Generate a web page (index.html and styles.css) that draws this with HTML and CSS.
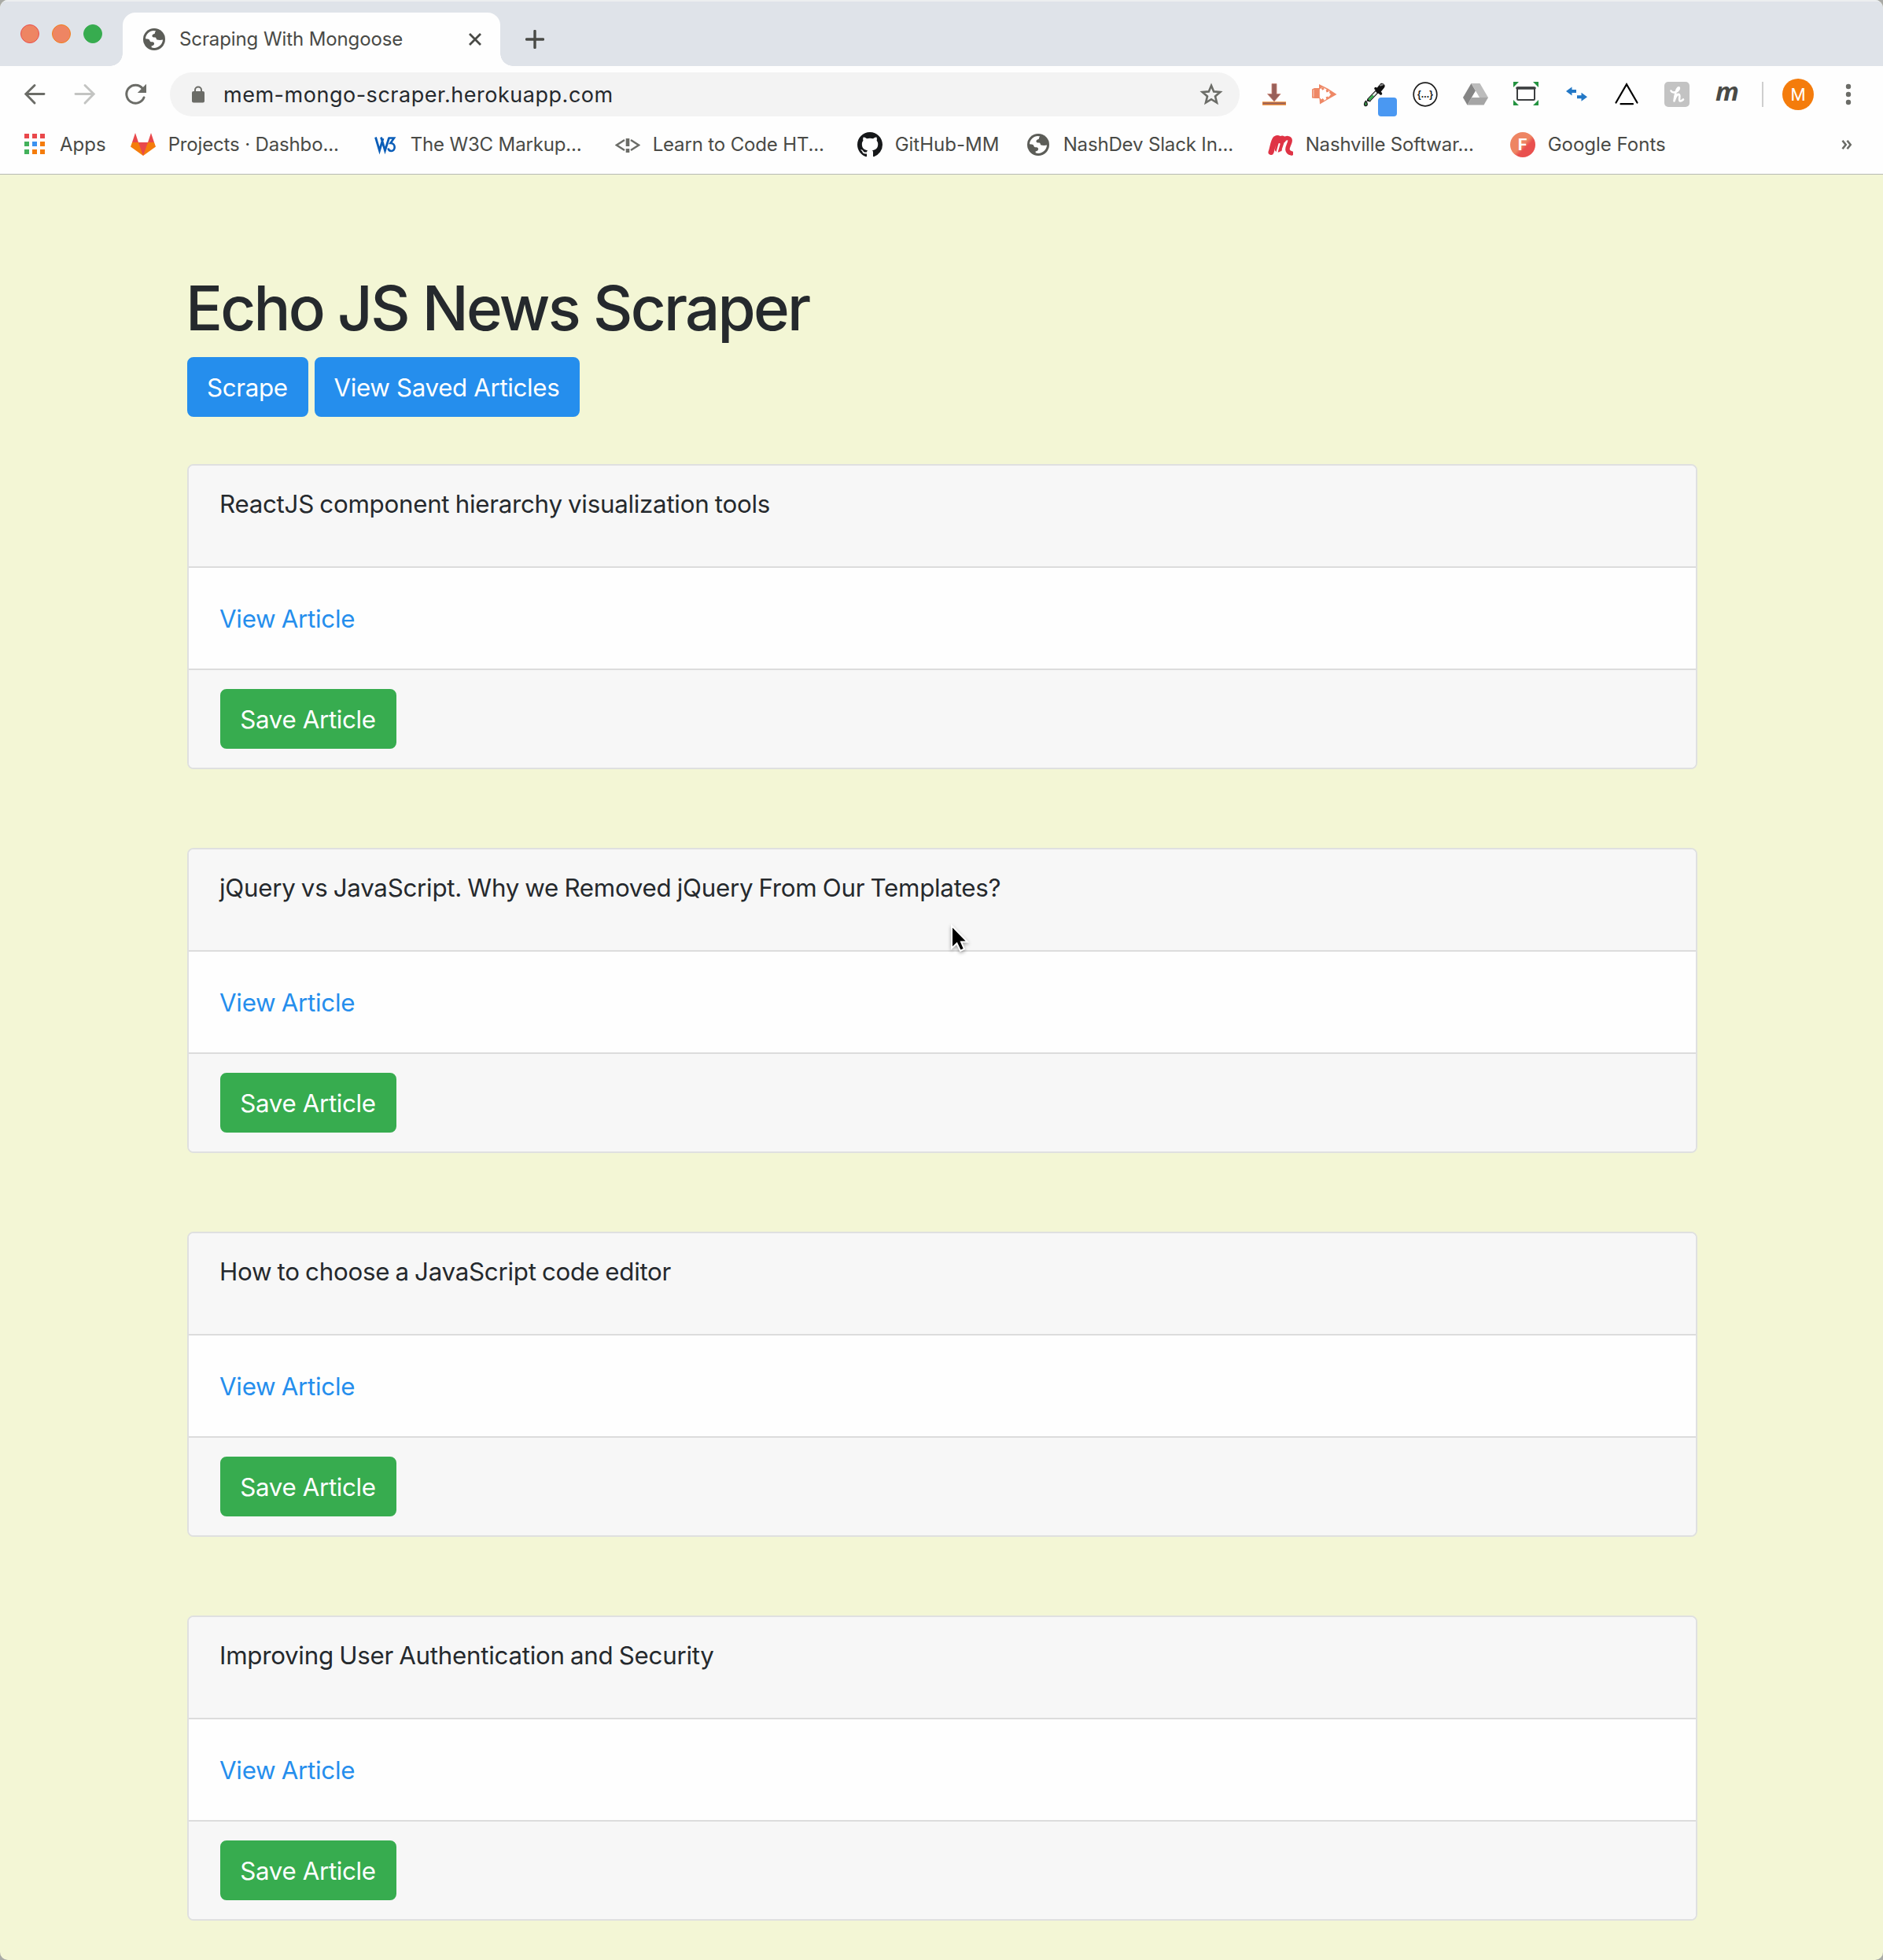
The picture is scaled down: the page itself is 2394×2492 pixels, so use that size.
FILE: index.html
```html
<!DOCTYPE html>
<html lang="en">
<head>
<meta charset="utf-8">
<title>Scraping With Mongoose</title>
<link rel="stylesheet" href="styles.css">
</head>
<body>
<svg class="defs" width="0" height="0" aria-hidden="true">
  <symbol id="globe" viewBox="0 0 28 28">
    <circle cx="14" cy="14" r="14" fill="#5c5d58"/>
    <path fill="#fff" d="M3 13.2C3.2 7.500 8.200 3.200 13.500 3.100L16.200 3.400C15.300 4.400 14.600 5.600 14.900 6.700C13.600 7.100 12.200 7.400 11.600 8.700C11.200 9.700 11.500 10.800 12.500 11.300C14 11.700 15.100 11.200 16.300 12.100C16.800 13 16.600 14.100 17.600 14.500C19.800 15 22.600 15 25 14.500C24.700 20 20 24.900 14 25C12.800 25 11.600 24.700 10.600 24.300L10.700 22.300C12.300 22.100 13.600 21.400 14 19.900C14.300 18.400 13.300 17.200 11.700 17.200C9.900 17.300 8.700 16.800 8.300 15.400C8.100 14.100 7.100 13.400 5.500 13.400Z"/>
  </symbol>
</svg>

<div class="window">
  <header class="tabstrip">
    <div class="lights"><i class="light light--close"></i><i class="light light--min"></i><i class="light light--max"></i></div>
    <div class="tab">
      <svg class="tab__icon" width="28" height="28"><use href="#globe"/></svg>
      <span class="tab__title">Scraping With Mongoose</span>
      <svg class="tab__close" width="16" height="16" viewBox="0 0 16 16"><path d="M1 1l14 14M15 1L1 15" stroke="#494a46" stroke-width="2.8"/></svg>
    </div>
    <svg class="newtab" width="24" height="24" viewBox="0 0 24 24"><path d="M12 1.500v21M1.500 12h21" stroke="#494a46" stroke-width="3.400" stroke-linecap="round"/></svg>
  </header>

  <div class="toolbar">
    <svg width="32" height="32" viewBox="0 0 32 32" fill="none" stroke="#6b6c67" stroke-width="2.900" stroke-linecap="round"><path d="M28 15.500H5M16 4.500L4.800 15.500L16 27"/></svg>
    <svg width="32" height="32" viewBox="0 0 32 32" fill="none" stroke="#c3c4c2" stroke-width="2.900" stroke-linecap="round"><path d="M4 15.500H27M16 4.500L27.200 15.500L16 27"/></svg>
    <svg width="32" height="32" viewBox="0 0 32 32"><path d="M27 20A11.500 11.500 0 1 1 25.300 8.500" fill="none" stroke="#6b6c67" stroke-width="3" stroke-linecap="round"/><path d="M30 2.800V14H18.800Z" fill="#6b6c67"/></svg>
    <div class="omnibox">
      <svg width="16" height="22" viewBox="0 0 16 22"><path d="M4 8V5.500a4 4 0 0 1 8 0V8" fill="none" stroke="#6b6c67" stroke-width="2"/><rect y="7" width="16" height="14.500" rx="2" fill="#6b6c67"/></svg>
      <span class="omnibox__url">mem-mongo-scraper.herokuapp.com</span>
      <svg class="omnibox__star" width="32" height="32" viewBox="0 0 32 32"><path d="M16 4.800L19.200 12.400L27.300 13L21 18.400L23 26.500L16 22.200L9 26.500L11 18.400L4.700 13L12.800 12.400Z" fill="none" stroke="#6b6c67" stroke-width="2.600"/></svg>
    </div>
    <div class="extensions">
      <svg width="32" height="32" viewBox="0 0 32 32"><path d="M13 2.500h6v13h5L16 25L7.500 15.500H13Z" fill="#98605a" stroke="#c98272" stroke-width=".8"/><rect x="1" y="25.300" width="30" height="4.500" fill="#f18a2d"/><rect x="1.500" y="26.300" width="29" height="2.200" fill="#98605a"/></svg>
      <svg width="32" height="32" viewBox="0 0 32 32"><path fill="#ee8866" d="M0 9.500L3 8h6V3L20 8.500L31.500 16L20 22.500L10 28.500L9.500 21H4L0 20.500Z"/><path fill="#fff" d="M9.800 9.500L13.500 6.800L22.500 12L22 14L24 16L22 18.500L20 21L16 23.500L13 24L9.800 20Z"/><path d="M2 10v9" stroke="#f8d0c2"/><path d="M13 7.500l1.500 2.500M19 10l1 3M19 19l1 3M12.500 22l2 2" stroke="#ee8866" stroke-width="3"/></svg>
      <span class="picker"><svg width="32" height="32" viewBox="0 0 32 32"><path d="M20 11L8.500 23L8 25" fill="none" stroke="#111" stroke-width="4.800"/><path d="M18.500 12.500L8.500 23" stroke="#e8eee9" stroke-width="2.600"/><path d="M14 17.500L8.300 23.200" stroke="#35ab4d" stroke-width="2.600"/><path d="M17 8.500L23.500 15" stroke="#111" stroke-width="3.500" stroke-linecap="round"/><path d="M20.500 11L25 5.500" stroke="#111" stroke-width="7" stroke-linecap="round"/><path d="M23 4.500L26 3.500" stroke="#888" stroke-width="2" stroke-linecap="round"/><path d="M4.500 24.500c2 2 2.500 6 0 6s-2.500-3.500 0-6Z" fill="#35ab4d" stroke="#222" stroke-width="1.500"/></svg><i class="picker__swatch"></i></span>
      <svg width="32" height="32" viewBox="0 0 32 32"><circle cx="16" cy="16" r="14.800" fill="#fff" stroke="#1d1d1d" stroke-width="1.700"/><text x="6" y="20" textLength="20" class="json">{...}</text></svg>
      <svg width="32" height="32" viewBox="0 0 32 32"><path fill="#858585" d="M10.500 2L16 11.500L5.500 29.500L0 20Z"/><path fill="#bcbcbc" d="M10.500 2H21.500L32 20H21Z"/><path fill="#a5a5a5" d="M11 20H32L26.500 29.500H5.500Z"/><path fill="#fff" d="M16 12L20.700 20H11.300Z"/></svg>
      <svg width="32" height="32" viewBox="0 0 32 32"><path fill="#239340" d="M0 0H7L0 7ZM32 0V7L25 0ZM0 30V23L7 30ZM32 30H25L32 23Z"/><rect x="5" y="7.500" width="22" height="15.500" rx="1" fill="#fff" stroke="#3c3f40" stroke-width="2"/><path d="M5 8h22" stroke="#3c3f40" stroke-width="3.600" stroke-linecap="round"/></svg>
      <svg width="32" height="32" viewBox="0 0 32 32" fill="#2378c6"><path d="M3 12L10.500 6.500V10H16V14H10.500V17.500Z"/><path d="M30 19.200L22.500 13.700V17.200H17V21.200H22.500V24.700Z"/></svg>
      <svg width="32" height="32" viewBox="0 0 32 32" fill="none" stroke="#000" stroke-width="2.200" stroke-linecap="round"><path d="M2.500 26.500L16 3.200L29.500 26.500M8.500 28.200H24"/></svg>
      <svg width="32" height="32" viewBox="0 0 32 32"><rect width="32" height="32" rx="5" fill="#c3c3c3"/><path d="M8.500 11.500C10 14.500 14 14 17 11.500C20 8.500 19 6.500 17.500 7.500C15 9.500 13.500 17 12.500 24.500C14 19 16.500 15.500 18.500 16C21 17 17.500 24 20 24.500C21.500 24.700 23 23.500 24 22.500" fill="none" stroke="#fff" stroke-width="2.600" stroke-linecap="round" stroke-linejoin="round"/></svg>
      <span class="ext-m">m</span>
    </div>
    <i class="divider"></i>
    <span class="avatar">M</span>
    <svg width="8" height="28" viewBox="0 0 8 28" fill="#6b6c67"><circle cx="4" cy="4" r="3.200"/><circle cx="4" cy="14" r="3.200"/><circle cx="4" cy="24" r="3.200"/></svg>
  </div>

  <nav class="bookmarks">
    <a class="bookmark"><svg width="32" height="32" viewBox="0 0 32 32"><path fill="#e9484b" d="M3 2h6v6H3zM13 2h6v6h-6zM23 2h6v6h-6z"/><path fill="#43b15b" d="M3 12h6v6H3zM3 22h6v6H3z"/><path fill="#3b92f0" d="M13 12h6v6h-6z"/><path fill="#f47c0c" d="M23 12h6v6h-6zM13 22h6v6h-6zM23 22h6v6h-6z"/></svg><span class="bookmark__label">Apps</span></a>
    <a class="bookmark bookmark--clipped"><svg width="32" height="32" viewBox="0 0 32 32"><path fill="#f47c0c" d="M2 13H30L32 18.500L16 30L0 18.500Z"/><path fill="#e9484b" d="M6 1L10 13H2ZM26 1L30 13H22ZM10 13H22L16 30Z"/></svg><span class="bookmark__label">Projects · Dashbo...</span></a>
    <a class="bookmark bookmark--clipped"><svg width="32" height="32" viewBox="0 0 32 32" fill="none" stroke="#0a5db8"><path d="M3.500 6.500L8.500 23.500L13 8M10.500 6.500L15.500 23.500L20.500 7.500" stroke-width="2.800"/><path d="M19.500 7.500H27L22.500 14C29.500 14 29 24 23.500 24C21.500 24 20 23 19.500 20.500" stroke-width="2.600"/></svg><span class="bookmark__label">The W3C Markup...</span></a>
    <a class="bookmark bookmark--clipped"><svg width="32" height="32" viewBox="0 0 32 32" fill="none" stroke="#6b6c67"><path d="M12 10L2 16.500L12 23M20 10L30 16.500L20 23" stroke-width="2.400"/><path d="M16 8v10M16 21v5" stroke-width="4.600"/></svg><span class="bookmark__label">Learn to Code HT...</span></a>
    <a class="bookmark bookmark--github"><svg width="32" height="32" viewBox="0 0 16 16"><path fill="#16181a" d="M8 0C3.580 0 0 3.580 0 8c0 3.540 2.290 6.530 5.470 7.590.4.070.55-.17.55-.38 0-.19-.01-.82-.01-1.490-2.010.37-2.530-.49-2.690-.94-.09-.23-.48-.94-.82-1.130-.28-.15-.68-.52-.01-.53.63-.01 1.080.58 1.230.82.72 1.210 1.870.87 2.330.66.07-.52.28-.87.51-1.070-1.780-.2-3.640-.89-3.640-3.950 0-.87.31-1.590.82-2.150-.08-.2-.36-1.020.08-2.120 0 0 .67-.21 2.200.82.64-.18 1.320-.27 2-.27s1.360.09 2 .27c1.530-1.040 2.200-.82 2.200-.82.44 1.100.16 1.920.08 2.120.51.56.82 1.270.82 2.150 0 3.070-1.870 3.750-3.650 3.950.29.25.54.73.54 1.480 0 1.070-.01 1.930-.01 2.200 0 .21.15.46.55.38A8.010 8.010 0 0 0 16 8c0-4.420-3.580-8-8-8z"/></svg><span class="bookmark__label">GitHub-MM</span></a>
    <a class="bookmark bookmark--clipped"><svg width="32" height="32" viewBox="0 0 32 32"><use href="#globe" x="2" y="2" width="28" height="28"/></svg><span class="bookmark__label">NashDev Slack In...</span></a>
    <a class="bookmark bookmark--clipped"><svg width="32" height="32" viewBox="0 0 32 32" fill="none" stroke="#df3345" stroke-linecap="round" stroke-linejoin="round"><path d="M4 25.500C6 20 6.500 12 9.500 8.500C13 6.500 15 8 14.500 11L12.500 22" stroke-width="7"/><path d="M14.500 10C17 6 20.500 6 20 10L15.500 22" stroke-width="5"/><path d="M20.500 9.500C24 6 29 7.500 28 12C27 16 24.500 19 25 22.500C25.500 26 28 26.500 30 27" stroke-width="5.500"/><path d="M14.500 15L11.500 25.500M21.500 14L18.800 22" stroke="#fefefe" stroke-width="2.200"/></svg><span class="bookmark__label">Nashville Softwar...</span></a>
    <a class="bookmark"><span class="f-badge">F</span><span class="bookmark__label">Google Fonts</span></a>
    <svg class="more" width="14" height="12" viewBox="0 0 14 12" fill="none" stroke="#6b6c67" stroke-width="2.600"><path d="M1.500 .8L5.700 6L1.500 11.200M7.500 .8L11.700 6L7.500 11.200"/></svg>
  </nav>

  <main class="page">
    <h1 class="page__title">Echo JS News Scraper</h1>
    <div class="actions"><button class="btn btn--primary">Scrape</button><button class="btn btn--primary">View Saved Articles</button></div>
    <div class="articles">
      <article class="card">
        <div class="card__header">ReactJS component hierarchy visualization tools</div>
        <div class="card__body"><a class="link">View Article</a></div>
        <div class="card__footer"><button class="btn btn--success">Save Article</button></div>
      </article>
      <article class="card">
        <div class="card__header">jQuery vs JavaScript. Why we Removed jQuery From Our Templates?</div>
        <div class="card__body"><a class="link">View Article</a></div>
        <div class="card__footer"><button class="btn btn--success">Save Article</button></div>
      </article>
      <article class="card">
        <div class="card__header">How to choose a JavaScript code editor</div>
        <div class="card__body"><a class="link">View Article</a></div>
        <div class="card__footer"><button class="btn btn--success">Save Article</button></div>
      </article>
      <article class="card">
        <div class="card__header">Improving User Authentication and Security</div>
        <div class="card__body"><a class="link">View Article</a></div>
        <div class="card__footer"><button class="btn btn--success">Save Article</button></div>
      </article>
    </div>
  </main>
  <svg class="cursor" width="30" height="42" viewBox="0 0 30 42"><path d="M5 6V34.500L11.500 28.500L16 38L21 35.500L17 26.500H25Z" fill="#000" stroke="#fff" stroke-width="2" /></svg>
</div>
</body>
</html>
```
FILE: styles.css
```css
* { box-sizing: border-box; }
html { background: #a9aaa6; }
body {
  margin: 0;
  font-family: Inter, "Liberation Sans", sans-serif;
  color: #25292d;
}
.defs { position: absolute; }
svg { flex: none; display: block; }

.window {
  position: relative;
  height: 2492px;
  border-radius: 10px;
  overflow: hidden;
  background: #f3f6d5;
}

/* Tab strip */
.tabstrip {
  display: flex;
  height: 84px;
  background: #dfe3e9;
  border-top: 2px solid #eceef0;
}
.lights { display: flex; gap: 16px; padding: 29px 0 0 26px; width: 156px; }
.light { width: 24px; height: 24px; border-radius: 50%; border: 1px solid; }
.light--close { background: #ee8563; border-color: #e9504e; }
.light--min { background: #ee8563; border-color: #f27f1c; }
.light--max { background: #37ac4f; border-color: #37ac4f; }
.tab {
  position: relative;
  display: flex;
  align-items: center;
  width: 480px;
  height: 68px;
  margin-top: 14px;
  padding: 0 24px 0 26px;
  border-radius: 16px 16px 0 0;
  background: #fefefe;
}
.tab::before, .tab::after {
  content: "";
  position: absolute;
  bottom: 0;
  width: 16px;
  height: 16px;
}
.tab::before { left: -16px; background: radial-gradient(circle at 0 0, transparent 15.5px, #fefefe 16px); }
.tab::after { right: -16px; background: radial-gradient(circle at 100% 0, transparent 15.5px, #fefefe 16px); }
.tab__title { margin-left: 18px; font-size: 24px; line-height: 30px; letter-spacing: -.1px; color: #494a46; }
.tab__close { margin-left: auto; }
.newtab { margin: 36px 0 0 32px; }

/* Toolbar */
.toolbar {
  display: flex;
  align-items: center;
  height: 72px;
  padding-left: 28px;
  background: #fefefe;
}
.toolbar > svg + svg { margin-left: 32px; }
.omnibox {
  display: flex;
  align-items: center;
  width: 1360px;
  height: 56px;
  margin-left: 28px;
  padding: 0 20px 0 28px;
  border-radius: 28px;
  background: #f3f3f3;
}
.omnibox__url { margin: 2px 0 0 24px; font-size: 27px; line-height: 34px; letter-spacing: .52px; color: #25292d; }
.omnibox__star { margin-left: auto; }
.extensions { display: flex; gap: 32px; margin-left: 28px; }
.json { font: bold 12px "Liberation Sans", sans-serif; fill: #1d1d1d; }
.picker { position: relative; width: 32px; height: 32px; }
.picker__swatch {
  position: absolute;
  left: 20px;
  top: 20px;
  width: 24px;
  height: 24px;
  border-radius: 4px;
  background: #4a98f2;
}
.ext-m {
  width: 32px;
  height: 32px;
  color: #494a46;
  font: italic bold 33px/24px "Noto Sans", sans-serif;
  text-align: center;
}
.divider { width: 2px; height: 32px; margin-left: 28px; background: #cfcfcf; }
.avatar {
  width: 40px;
  height: 40px;
  margin: 0 40px 0 24px;
  border-radius: 50%;
  background: #f47c0c;
  color: #fff;
  font: 22px/41px Roboto, sans-serif;
  text-align: center;
}

/* Bookmarks bar */
.bookmarks {
  display: flex;
  align-items: center;
  gap: 32px;
  height: 66px;
  padding: 0 39px 10px 28px;
  border-bottom: 1px solid #b6b9b3;
  background: #fefefe;
}
.bookmark { display: flex; align-items: center; gap: 16px; height: 32px; color: #494a46; }
.bookmark:first-child { margin-right: -1px; }
.bookmark__label { font-size: 24px; line-height: 30px; white-space: nowrap; }
.bookmark--clipped .bookmark__label { width: 228px; letter-spacing: -.15px; }
.bookmark--github .bookmark__label { width: 134px; }
.f-badge {
  width: 32px;
  height: 32px;
  border-radius: 50%;
  background: linear-gradient(135deg, #ee8563 50%, #e9504e 62%);
  color: #fff;
  font: bold 21px/32px Roboto, sans-serif;
  text-align: center;
}
.more { margin-left: auto; }

/* Page */
.page { padding: 121px 236px 0 238px; }
.page__title { margin: 0 0 13px -2px; font-size: 78px; font-weight: 550; line-height: 98px; letter-spacing: -2.76px; }
.actions { display: flex; gap: 8px; }
.btn {
  height: 76px;
  padding: 13px 24px 11px 23px;
  border: 2px solid;
  border-radius: 8px;
  color: #fff;
  font: 400 31.3px/48px Inter, "Liberation Sans", sans-serif;
  letter-spacing: -.36px;
}
.btn--primary { background: #258eed; border-color: #258eed; }
.btn--success { width: 224px; background: #37ac4f; border-color: #37ac4f; }
.articles { display: flex; flex-direction: column; gap: 100px; margin-top: 60px; }
.card {
  border: 2px solid #dfe0e0;
  border-radius: 8px;
  overflow: hidden;
  background: #fefefe;
  font-size: 31.3px;
  line-height: 48px;
  letter-spacing: -.27px;
  word-spacing: -1.2px;
}
.card__header { height: 130px; padding: 25px 39px; border-bottom: 2px solid #dcdcdc; background: #f7f7f7; }
.card__body { height: 128px; padding: 41px 39px; }
.card__footer { height: 126px; padding: 24px 40px; border-top: 2px solid #dcdcdc; background: #f7f7f7; }

.link { color: #258eed; }

.cursor {
  position: absolute;
  left: 1205px;
  top: 1171px;
  filter: drop-shadow(0 2px 2px rgba(0, 0, 0, .35));
}
```
